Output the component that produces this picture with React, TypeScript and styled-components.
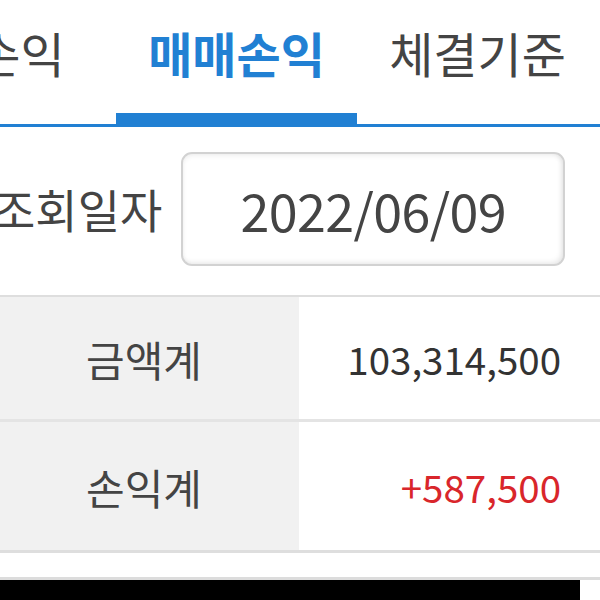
import React, { FC } from 'react';
import styled, { createGlobalStyle } from 'styled-components';

const GlobalStyle = createGlobalStyle`
  html, body {
    margin: 0;
    padding: 0;
    background: #FFFFFF;
  }
  body {
    font-family: "Noto Sans CJK KR", "Noto Sans", sans-serif;
    overflow: hidden;
  }
`;

const Screen = styled.div`
  width: 600px;
  height: 600px;
  display: flex;
  flex-direction: column;
  overflow: hidden;
  background: #FFFFFF;
`;

const TabBar = styled.div`
  height: 127px;
  display: flex;
  align-items: stretch;
  border-bottom: 3px solid #2180D3;
  box-sizing: border-box;
  margin-left: -75px;
`;

const Tab = styled.div<{ $width: number; $active?: boolean }>`
  flex: 0 0 ${(p) => p.$width}px;
  display: flex;
  justify-content: center;
  padding-top: 22px;
  box-sizing: border-box;
  font-size: 48px;
  line-height: 60px;
  font-weight: ${(p) => (p.$active ? 700 : 400)};
  color: ${(p) => (p.$active ? '#2180D3' : '#444444')};
  border-bottom: 14px solid ${(p) => (p.$active ? '#2180D3' : 'transparent')};
  margin-bottom: -3px;
  white-space: nowrap;
`;

const SearchRow = styled.div`
  height: 168px;
  display: flex;
  align-items: center;
  padding-top: 25px;
  padding-bottom: 29px;
  box-sizing: border-box;
  gap: 19px;
`;

const SearchLabel = styled.div`
  font-size: 46px;
  color: #444444;
  margin-left: -7px;
  margin-top: -3px;
  white-space: nowrap;
`;

const DateBox = styled.div`
  width: 384px;
  height: 114px;
  box-sizing: border-box;
  border: 2px solid #D2D2D2;
  border-radius: 11px;
  box-shadow: inset -2px -2px 5px rgba(0, 0, 0, 0.08), inset 0 2px 5px rgba(0, 0, 0, 0.06);
  display: flex;
  align-items: center;
  justify-content: center;
  font-size: 52px;
  color: #444444;
  letter-spacing: -0.6px;
`;

const SummaryTable = styled.div`
  border-top: 2px solid #DEDEDE;
  border-bottom: 3px solid #DEDEDE;
  display: flex;
  flex-direction: column;
`;

const SummaryRow = styled.div<{ $height: number; $divider?: boolean }>`
  height: ${(p) => p.$height}px;
  display: grid;
  grid-template-columns: 299px 1fr;
  border-top: ${(p) => (p.$divider ? '3px solid #E4E4E4' : 'none')};
`;

const LabelCell = styled.div`
  background: #F1F1F1;
  display: flex;
  align-items: center;
  justify-content: flex-end;
  padding-right: 97px;
  font-size: 42px;
  color: #444444;
`;

const ValueCell = styled.div<{ $tone?: 'up' | 'plain' }>`
  display: flex;
  align-items: center;
  justify-content: flex-end;
  padding-right: 39px;
  font-size: 38.5px;
  color: ${(p) => (p.$tone === 'up' ? '#D9262B' : '#333333')};
`;

const BottomArea = styled.div`
  flex: 1;
  display: flex;
  flex-direction: column;
  justify-content: flex-end;
`;

const BottomEdge = styled.div`
  border-top: 3px solid #DCDCDC;
  height: 20px;
`;

const BottomBlock = styled.div`
  width: 580px;
  height: 20px;
  background: #000000;
`;

const tabs = [
  { label: '손익', width: 191 },
  { label: '매매손익', width: 241, active: true },
  { label: '체결기준', width: 241 },
];

const App: FC = () => (
  <>
    <GlobalStyle />
    <Screen>
      <TabBar>
        {tabs.map((t) => (
          <Tab key={t.label} $width={t.width} $active={t.active}>
            {t.label}
          </Tab>
        ))}
      </TabBar>
      <SearchRow>
        <SearchLabel>조회일자</SearchLabel>
        <DateBox>2022/06/09</DateBox>
      </SearchRow>
      <SummaryTable>
        <SummaryRow $height={122}>
          <LabelCell>금액계</LabelCell>
          <ValueCell>103,314,500</ValueCell>
        </SummaryRow>
        <SummaryRow $height={128} $divider>
          <LabelCell>손익계</LabelCell>
          <ValueCell $tone="up">+587,500</ValueCell>
        </SummaryRow>
      </SummaryTable>
      <BottomArea>
        <BottomEdge>
          <BottomBlock />
        </BottomEdge>
      </BottomArea>
    </Screen>
  </>
);

export default App;
